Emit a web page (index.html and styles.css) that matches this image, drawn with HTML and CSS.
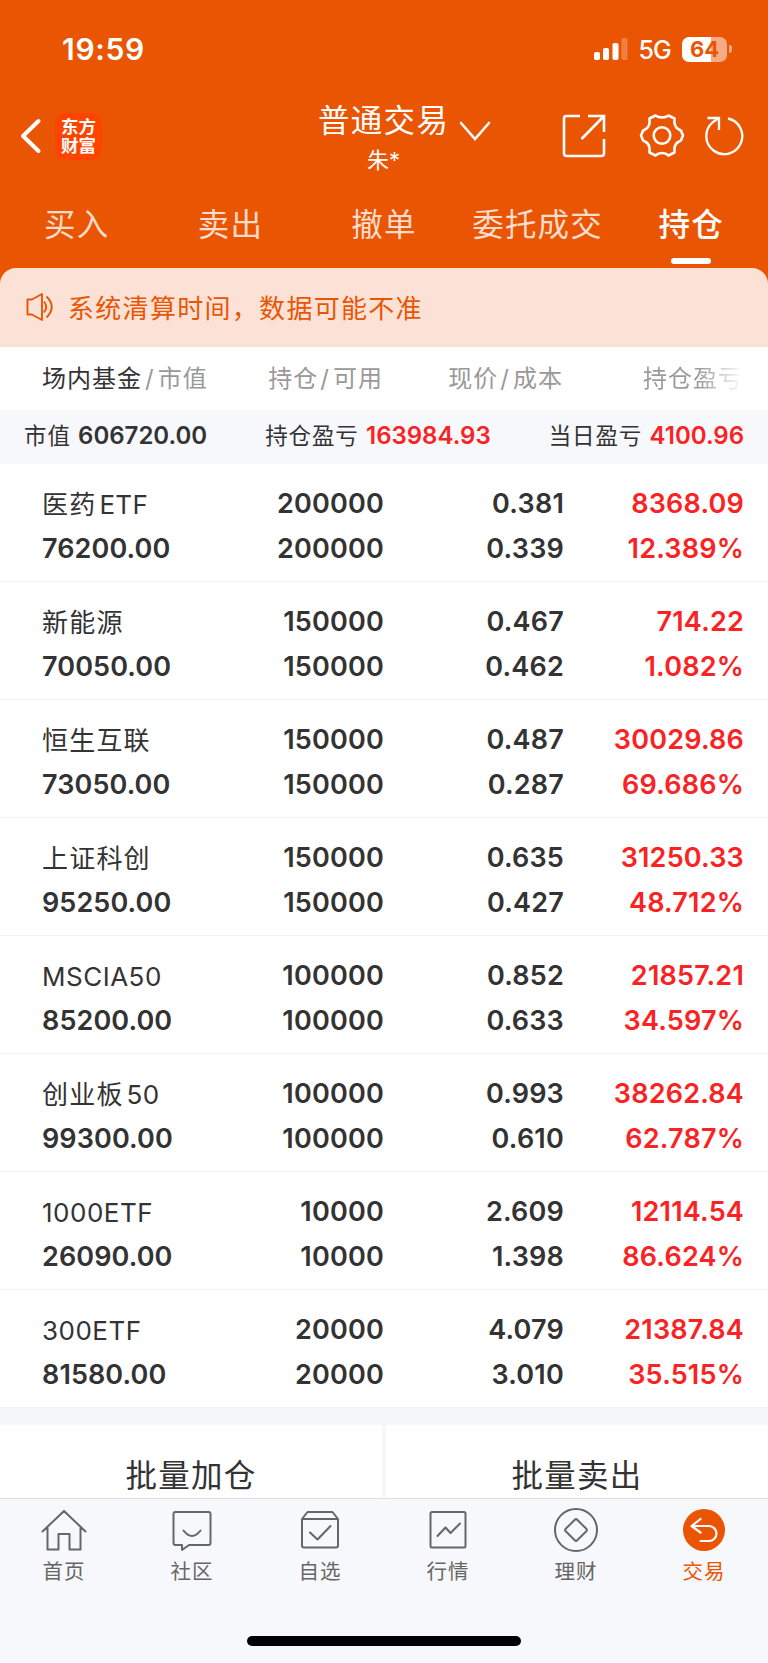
FILE: index.html
```html
<!DOCTYPE html>
<html lang="zh-CN">
<head>
    <meta charset="UTF-8">
    <meta name="viewport" content="width=device-width, initial-scale=1.0">
    <title>普通交易 - 持仓</title>
    <link rel="stylesheet" href="styles.css">
</head>
<body>

<header class="header">
    <div class="status-bar">
        <span class="time">19:59</span>
        <div class="status-icons">
            <svg class="signal" width="36" height="24" viewBox="0 0 36 24" fill="#fff">
                <rect x="1" y="15" width="6" height="8" rx="1.8"/>
                <rect x="10" y="11" width="6" height="12" rx="1.8"/>
                <rect x="19.5" y="6" width="6" height="17" rx="1.8"/>
                <rect x="28.5" y="1" width="6" height="22" rx="1.8" opacity="0.25"/>
            </svg>
            <span class="network">5G</span>
            <div class="battery">64</div>
            <div class="battery-tip"></div>
        </div>
    </div>

    <div class="nav">
        <div class="nav-left">
            <svg width="22" height="38" viewBox="0 0 22 38" fill="none" stroke="#fff" stroke-width="4" stroke-linecap="round" stroke-linejoin="round">
                <path d="M18.5 4L3 19l15.500 15"/>
            </svg>
            <div class="logo"><span>东方</span><span>财富</span></div>
        </div>
        <div class="nav-title">
            <div class="account">
                <h1>普通交易</h1>
                <p>朱*</p>
            </div>
            <svg width="32" height="24" viewBox="0 0 32 24" fill="none" stroke="#fff" stroke-width="2.600" stroke-linecap="round">
                <path d="M2 3l14 16L30 3"/>
            </svg>
        </div>
        <div class="nav-right">
            <svg class="icon-share" width="44" height="44" viewBox="0 0 44 44" fill="none" stroke="#fff" stroke-width="2.600">
                <path d="M18 2H4.500A2.500 2.500 0 0 0 2 4.500v35A2.500 2.500 0 0 0 4.500 42h35a2.500 2.500 0 0 0 2.500-2.500V25"/>
                <path d="M26 2h16v16M41.500 2.500L19.500 25"/>
            </svg>
            <svg class="icon-gear" width="46" height="46" viewBox="0 0 46 46" fill="none" stroke="#fff" stroke-width="2.600" stroke-linejoin="round">
                <path d="M16.500 2.500Q19 4.500 23 4.500Q27 4.500 29.500 2.500L35.500 5.500Q34.500 14 40 16.500Q42.500 17.500 42.500 19L44 22.500L42.500 26Q42.500 27.500 40 28.500Q34.500 31 35.500 39.500L29.500 42.500Q27 40 23 40Q19 40 16.500 42.500L10.500 39.500Q11.500 31 6 28.500Q3.500 27.500 3.500 26L2 22.500L3.500 19Q3.500 17.500 6 16.500Q11.500 14 10.500 5.500Z"/>
                <circle cx="23" cy="22.500" r="8.300"/>
            </svg>
            <svg class="icon-refresh" width="42" height="42" viewBox="0 0 42 42" fill="none" stroke="#fff" stroke-width="2.300">
                <path d="M25 3.500A18 18 0 1 1 9.500 7.500L15 3.500"/>
                <path d="M4.500 3h11.500v12"/>
            </svg>
        </div>
    </div>

    <nav class="tabs">
        <a class="tab">买入</a>
        <a class="tab">卖出</a>
        <a class="tab">撤单</a>
        <a class="tab">委托成交</a>
        <a class="tab active">持仓</a>
    </nav>

    <div class="notice">
        <svg width="28" height="30" viewBox="0 0 28 30" fill="none" stroke="#ea5504" stroke-width="1.900" stroke-linejoin="round">
            <path d="M1.500 7.500H6L16 2v26L6 22.500H1.500Z"/>
            <path d="M18 9.500Q22.500 15 18 20.500M20.500 4.500Q31 15 20.500 25.500"/>
        </svg>
        <span>系统清算时间，数据可能不准</span>
    </div>
</header>

<main class="content">
    <div class="grid-row table-head">
        <div><b>场内基金</b><i>/</i>市值</div>
        <div>持仓<i>/</i>可用</div>
        <div>现价<i>/</i>成本</div>
        <div class="fade">持仓盈亏</div>
    </div>

    <div class="summary">
        <div>市值 <strong>606720.00</strong></div>
        <div>持仓盈亏 <strong class="red">163984.93</strong></div>
        <div>当日盈亏 <strong class="red">4100.96</strong></div>
    </div>

    <div class="grid-row item">
        <div><span class="name">医药<em>ETF</em></span>76200.00</div>
        <div>200000<br>200000</div>
        <div>0.381<br>0.339</div>
        <div class="red">8368.09<br>12.389%</div>
    </div>
    <div class="grid-row item">
        <div><span class="name">新能源</span>70050.00</div>
        <div>150000<br>150000</div>
        <div>0.467<br>0.462</div>
        <div class="red">714.22<br>1.082%</div>
    </div>
    <div class="grid-row item">
        <div><span class="name">恒生互联</span>73050.00</div>
        <div>150000<br>150000</div>
        <div>0.487<br>0.287</div>
        <div class="red">30029.86<br>69.686%</div>
    </div>
    <div class="grid-row item">
        <div><span class="name">上证科创</span>95250.00</div>
        <div>150000<br>150000</div>
        <div>0.635<br>0.427</div>
        <div class="red">31250.33<br>48.712%</div>
    </div>
    <div class="grid-row item">
        <div><span class="name latin">MSCIA50</span>85200.00</div>
        <div>100000<br>100000</div>
        <div>0.852<br>0.633</div>
        <div class="red">21857.21<br>34.597%</div>
    </div>
    <div class="grid-row item">
        <div><span class="name">创业板<em>50</em></span>99300.00</div>
        <div>100000<br>100000</div>
        <div>0.993<br>0.610</div>
        <div class="red">38262.84<br>62.787%</div>
    </div>
    <div class="grid-row item">
        <div><span class="name latin">1000ETF</span>26090.00</div>
        <div>10000<br>10000</div>
        <div>2.609<br>1.398</div>
        <div class="red">12114.54<br>86.624%</div>
    </div>
    <div class="grid-row item">
        <div><span class="name latin">300ETF</span>81580.00</div>
        <div>20000<br>20000</div>
        <div>4.079<br>3.010</div>
        <div class="red">21387.84<br>35.515%</div>
    </div>

    <div class="batch">
        <button>批量加仓</button>
        <button>批量卖出</button>
    </div>
</main>

<footer class="footer">
    <nav class="menu">
        <a class="menu-item">
            <svg width="46" height="46" viewBox="0 0 46 46">
                <path d="M1.500 24.500L23 4l21.500 20.500M6.500 21v21.500h11V27h11v15.500h11V21"/>
            </svg>
            首页
        </a>
        <a class="menu-item">
            <svg width="46" height="46" viewBox="0 0 46 46">
                <path d="M6.500 5h33a2 2 0 0 1 2 2v29a2 2 0 0 1-2 2H20l-7 5v-5H6.500a2 2 0 0 1-2-2V7a2 2 0 0 1 2-2ZM14.500 23.500q8.500 11 17 0"/>
            </svg>
            社区
        </a>
        <a class="menu-item">
            <svg width="46" height="46" viewBox="0 0 46 46">
                <path d="M5 12l5.500-7h25L41 12v26.500a2 2 0 0 1-2 2H7a2 2 0 0 1-2-2ZM5 12h36M13 25.500l7.500 7L33.500 19"/>
            </svg>
            自选
        </a>
        <a class="menu-item">
            <svg width="46" height="46" viewBox="0 0 46 46">
                <rect x="5.500" y="5" width="35" height="35.500" rx="1.500"/>
                <path d="M12.500 29l8-8.500 5 5.500L35 16.500"/>
            </svg>
            行情
        </a>
        <a class="menu-item">
            <svg width="46" height="46" viewBox="0 0 46 46">
                <circle cx="23" cy="23" r="21"/>
                <path d="M21.800 12.700q1.200-1.200 2.400 0l9.100 9.100q1.200 1.200 0 2.400l-9.100 9.100q-1.200 1.200-2.400 0l-9.100-9.100q-1.200-1.200 0-2.400Z"/>
            </svg>
            理财
        </a>
        <a class="menu-item current">
            <svg width="46" height="46" viewBox="0 0 46 46">
                <circle cx="23" cy="23" r="21" fill="#ea5504" stroke="none"/>
                <path d="M19.500 12L10.500 19l9 6.500M11 19h17a7.500 7.500 0 0 1 0 15h-8.500" stroke="#fff" stroke-width="2.200"/>
            </svg>
            交易
        </a>
    </nav>
    <div class="home-indicator"></div>
</footer>

</body>
</html>
```
FILE: styles.css
```css
* {
    box-sizing: border-box;
}

body {
    margin: 0;
    height: 1663px;
    display: flex;
    flex-direction: column;
    overflow: hidden;
    background: #fff;
    color: #333;
    font-family: Inter, "Noto Sans CJK SC", sans-serif;
}

.header {
    background: #ea5504;
    color: #fff;
}

/* status bar */
.status-bar {
    height: 88px;
    padding: 10px 36px 0 62px;
    display: flex;
    align-items: center;
    justify-content: space-between;
}

.time {
    font-size: 30px;
    font-weight: 600;
    letter-spacing: 0.7px;
}

.status-icons {
    display: flex;
    align-items: center;
}

.network {
    margin: 2px 11px 0 9px;
    font-size: 25px;
    font-weight: 500;
    letter-spacing: -0.8px;
}

.battery {
    width: 45px;
    height: 25px;
    border-radius: 7px;
    background: linear-gradient(90deg, #fff 65%, #f6ab82 65%);
    color: #ea5504;
    font-size: 22px;
    font-weight: 700;
    line-height: 25px;
    text-align: center;
}

.battery-tip {
    width: 3px;
    height: 8px;
    margin-left: 2px;
    border-radius: 0 4px 4px 0;
    background: #f6ab82;
}

/* title bar */
.nav {
    height: 96px;
    display: grid;
    grid-template-columns: 318px 245px 1fr;
}

.nav-left {
    display: flex;
    align-items: center;
    padding-left: 20px;
    gap: 13px;
}

.logo {
    width: 47px;
    height: 47px;
    display: flex;
    flex-direction: column;
    align-items: center;
    padding-top: 4px;
    border-radius: 10px;
    background: #ff4400;
    font-size: 17.5px;
    font-weight: 700;
    line-height: 19.5px;
}

.nav-title {
    display: flex;
    align-items: flex-start;
    gap: 10px;
}

.nav-title svg {
    margin-top: 32px;
}

.account {
    text-align: center;
}

.account h1 {
    margin: 12px 0 0;
    font-size: 31.500px;
    font-weight: 400;
    line-height: 41px;
    letter-spacing: 1.3px;
}

.account p {
    margin: 4px 0 0;
    font-size: 22px;
    line-height: 30px;
}

.nav-right {
    display: flex;
    align-items: center;
}

.icon-share {
    margin-left: -1px;
}

.icon-gear {
    margin-left: 33px;
}

.icon-refresh {
    margin-left: 18px;
}

/* trade tabs */
.tabs {
    height: 84px;
    display: grid;
    grid-template-columns: repeat(5, 1fr);
}

.tab {
    display: flex;
    flex-direction: column;
    align-items: center;
    padding-top: 17px;
    color: #fcdccb;
    font-size: 31.500px;
    line-height: 48px;
    letter-spacing: 1.2px;
}

.tab.active {
    color: #fff;
    font-weight: 500;
}

.tab.active::after {
    content: "";
    width: 40px;
    height: 6px;
    margin-top: 9px;
    border-radius: 3px;
    background: #fff;
}

.notice {
    height: 79px;
    padding: 0 0 2px 26px;
    display: flex;
    align-items: center;
    gap: 14px;
    border-radius: 16px 16px 0 0;
    background: #fce2d6;
    color: #ea5504;
    font-size: 26px;
    letter-spacing: 1.3px;
}

/* holdings table */
.content {
    flex: 1;
    min-height: 0;
    overflow: hidden;
}

.grid-row {
    display: grid;
    grid-template-columns: 165px 176px 180px 180px;
    padding: 0 25px 0 42px;
    text-align: right;
    white-space: nowrap;
}

.grid-row > div:first-child {
    text-align: left;
}

.table-head {
    height: 63px;
    color: #999;
    font-size: 24px;
    line-height: 64px;
    letter-spacing: 1px;
}

.table-head b {
    color: #333;
    font-weight: 400;
}

.table-head i {
    margin: 0 3px;
    font-style: normal;
}

.table-head div + div i {
    margin-left: 2px;
}

.fade {
    background: linear-gradient(90deg, #999 75%, #fff);
    background-clip: text;
    -webkit-background-clip: text;
    color: transparent;
}

.summary {
    height: 54px;
    padding: 0 24px 7px;
    display: flex;
    align-items: center;
    justify-content: space-between;
    background: #f7f8fb;
    font-size: 22.500px;
    letter-spacing: 0.9px;
}

.summary strong {
    font-size: 24px;
    font-weight: 600;
    letter-spacing: 0;
}

.red,
.summary .red {
    color: #fa2222;
}

.item {
    grid-template-columns: 165px 177px 180px 180px;
    height: 118px;
    padding-top: 18px;
    padding-right: 24px;
    border-bottom: 1px solid #f3f3f4;
    font-size: 27px;
    font-weight: 600;
    line-height: 44.500px;
    letter-spacing: 0.2px;
}

.item > div:first-child {
    letter-spacing: 0.1px;
}

.name {
    display: block;
    height: 44.500px;
    font-size: 26px;
    font-weight: 400;
    line-height: 45px;
    letter-spacing: 1.2px;
}

.name em {
    margin-left: 3px;
    font-style: normal;
    letter-spacing: 0.3px;
}

.name.latin {
    letter-spacing: 0.5px;
}

.batch {
    display: grid;
    grid-template-columns: 1fr 1fr;
    gap: 4px;
    padding-top: 17px;
    background: #f6f7f9;
}

.batch button {
    height: 95px;
    border: 0;
    background: #fff;
    color: #333;
    font-family: inherit;
    font-size: 31.500px;
    letter-spacing: 1.3px;
}

/* bottom menu */
.footer {
    height: 165px;
    display: flex;
    flex-direction: column;
    align-items: center;
    justify-content: space-between;
    padding-bottom: 17px;
    border-top: 1px solid #dddde0;
    background: #f7f8fb;
}

.menu {
    width: 100%;
    display: grid;
    grid-template-columns: repeat(6, 1fr);
}

.menu-item {
    display: flex;
    flex-direction: column;
    align-items: center;
    padding-top: 8px;
    color: #666;
    font-size: 20.500px;
    line-height: 38px;
    letter-spacing: 1px;
}

.menu-item svg {
    fill: none;
    stroke: #666;
    stroke-width: 2;
    stroke-linejoin: round;
    stroke-linecap: round;
}

.menu-item.current {
    color: #ea5504;
}

.home-indicator {
    width: 274px;
    height: 10px;
    border-radius: 5px;
    background: #000;
}
```
